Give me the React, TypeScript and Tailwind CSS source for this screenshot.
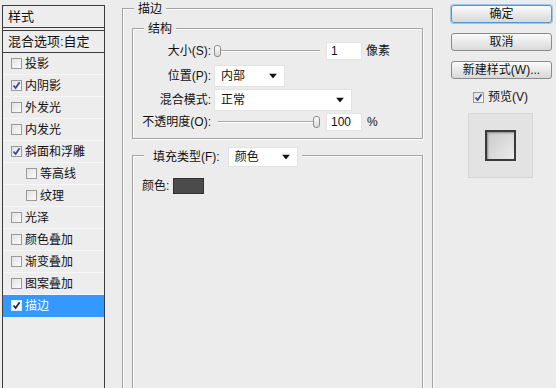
import React from "react";

const FONT = { fontFamily: '"Liberation Sans", "Noto Sans CJK SC", sans-serif' };

const EFFECTS = [
  { label: "投影", checked: false },
  { label: "内阴影", checked: true },
  { label: "外发光", checked: false },
  { label: "内发光", checked: false },
  { label: "斜面和浮雕", checked: true },
  { label: "等高线", checked: false, indent: true },
  { label: "纹理", checked: false, indent: true },
  { label: "光泽", checked: false },
  { label: "颜色叠加", checked: false },
  { label: "渐变叠加", checked: false },
  { label: "图案叠加", checked: false },
  { label: "描边", checked: true, selected: true },
];

function Check({ checked, light }: { checked: boolean; light?: boolean }) {
  return (
    <span
      className={`flex h-[11px] w-[11px] shrink-0 items-center justify-center border ${
        light ? "border-[#dfe9f7] bg-white" : "border-[#9a9a9a] bg-gradient-to-br from-[#e2e2e2] to-[#fbfbfb]"
      }`}
    >
      {checked && (
        <svg width="9" height="9" viewBox="0 0 9 9">
          <path d="M1.5 4.5 L3.6 7 L7.6 1.2" fill="none" stroke={light ? "#1a2a6a" : "#3b4a9a"} strokeWidth="1.8" />
        </svg>
      )}
    </span>
  );
}

function Caret() {
  return (
    <svg width="8" height="5" viewBox="0 0 8 5" className="absolute right-[7px] top-1/2 -translate-y-1/2">
      <path d="M0 0 H8 L4 5 Z" fill="#111" />
    </svg>
  );
}

function Select({ value, width }: { value: string; width: string }) {
  return (
    <div className={`relative flex h-full items-center border border-[#e2e2e2] bg-white pl-[6px] text-[12px] ${width}`}>
      {value}
      <Caret />
    </div>
  );
}

function Slider({ width, thumb }: { width: string; thumb: "start" | "end" }) {
  return (
    <div className={`relative h-[12px] ${width}`}>
      <div className="absolute left-0 right-0 top-[5px] h-[2px] border-t border-[#a8a8a8] bg-white" />
      <div
        className={`absolute top-0 h-[12px] w-[7px] rounded-[3px] border border-[#8c8c8c] bg-gradient-to-b from-white to-[#d8d8d8] ${
          thumb === "start" ? "left-0" : "right-0"
        }`}
      />
    </div>
  );
}

function NumberBox({ value }: { value: string }) {
  return (
    <div className="flex h-[18px] w-[36px] items-center border border-[#e4e4e4] bg-white pl-[4px] text-[12px]">
      {value}
    </div>
  );
}

function Button({ label, focused }: { label: string; focused?: boolean }) {
  return (
    <div
      className={`flex h-[18px] items-center justify-center rounded-[3px] border bg-gradient-to-b from-[#fafafa] to-[#d9d9d9] text-[12px] ${
        focused ? "border-[#4f97d6] shadow-[0_0_0_1px_#9cc6ea]" : "border-[#8a8a8a]"
      }`}
    >
      {label}
    </div>
  );
}

function StyleList() {
  return (
    <div className="ml-[2px] mt-[5px] h-[400px] w-[103px] shrink-0 border border-b-0 border-[#3c3c3c] bg-[#ededed] text-[12px]">
      <div className="flex h-[22px] items-center border-b border-[#3c3c3c] pl-[5px] text-[13px]">样式</div>
      <div className="mt-[2px] flex h-[23px] items-center border-y border-[#3c3c3c] pl-[5px] text-[13px]">
        混合选项:自定
      </div>
      {EFFECTS.map((e) => (
        <div
          key={e.label}
          className={`flex h-[22px] items-center gap-[3px] border-b ${
            e.selected ? "border-[#3399ff] bg-[#3399ff] text-white" : "border-[#f6f6f6]"
          } ${e.indent ? "pl-[23px]" : "pl-[8px]"}`}
        >
          <Check checked={e.checked} light={e.selected} />
          <span>{e.label}</span>
        </div>
      ))}
    </div>
  );
}

function Group({ title, className, children }: { title: React.ReactNode; className: string; children?: React.ReactNode }) {
  return (
    <div className={`relative border border-[#a4a4a4] shadow-[inset_1px_1px_0_#fafafa,1px_1px_0_#fafafa] ${className}`}>
      <div className="absolute -top-[9px] left-[11px] flex items-center bg-[#ececec] px-[4px] text-[12px]">{title}</div>
      {children}
    </div>
  );
}

function Row({ label, children, className = "" }: { label: string; children: React.ReactNode; className?: string }) {
  return (
    <div className={`flex h-[22px] items-center ${className}`}>
      <span className="w-[78px] shrink-0 whitespace-nowrap text-right">{label}</span>
      {children}
    </div>
  );
}

export default function App() {
  return (
    <div className="flex h-[388px] w-[556px] overflow-hidden bg-[#ececec] text-[#111]" style={FONT}>
      <StyleList />

      <Group title="描边" className="ml-[17px] mt-[8px] h-[400px] w-[311px] shrink-0 pl-[9px] pt-[19px]">
        <Group title="结构" className="h-[111px] w-[291px] pt-[11px] text-[12px]">
          <Row label="大小(S):">
            <div className="ml-[3px]">
              <Slider width="w-[106px]" thumb="start" />
            </div>
            <div className="ml-[6px]">
              <NumberBox value="1" />
            </div>
            <span className="ml-[4px]">像素</span>
          </Row>
          <Row label="位置(P):" className="mt-[3px]">
            <div className="ml-[3px] h-full">
              <Select value="内部" width="w-[71px]" />
            </div>
          </Row>
          <Row label="混合模式:" className="mt-[2px]">
            <div className="ml-[3px] h-full">
              <Select value="正常" width="w-[138px]" />
            </div>
          </Row>
          <Row label="不透明度(O):">
            <div className="ml-[7px]">
              <Slider width="w-[102px]" thumb="end" />
            </div>
            <div className="ml-[6px]">
              <NumberBox value="100" />
            </div>
            <span className="ml-[5px]">%</span>
          </Row>
        </Group>

        <Group
          title={
            <>
              <span className="pl-[5px]">填充类型(F):</span>
              <div className="ml-[8px] h-[20px]">
                <Select value="颜色" width="w-[70px]" />
              </div>
            </>
          }
          className="mt-[16px] h-[300px] w-[291px] pt-[21px] text-[12px]"
        >
          <div className="flex items-center pl-[9px]">
            <span>颜色:</span>
            <span className="ml-[4px] h-[16px] w-[31px] border border-[#303030] bg-[#4b4b4b]" />
          </div>
        </Group>
      </Group>

      <div className="ml-[18px] flex w-[101px] shrink-0 flex-col pt-[5px] text-[12px]">
        <Button label="确定" focused />
        <div className="mt-[10px]">
          <Button label="取消" />
        </div>
        <div className="mt-[10px]">
          <Button label="新建样式(W)..." />
        </div>
        <div className="ml-[17px] mt-[9px] flex w-[65px] flex-col">
          <div className="flex items-center gap-[4px] pl-[5px]">
            <Check checked />
            <span className="whitespace-nowrap">预览(V)</span>
          </div>
          <div className="mt-[7px] flex h-[65px] w-[65px] items-center justify-center border border-[#d6d6d6] bg-[#e3e3e3]">
            <div className="h-[31px] w-[31px] border-2 border-[#3a3a3a] bg-gradient-to-br from-[#c9c9c9] to-[#ececec] shadow-[inset_1px_1px_2px_#8a8a8a]" />
          </div>
        </div>
      </div>
    </div>
  );
}
